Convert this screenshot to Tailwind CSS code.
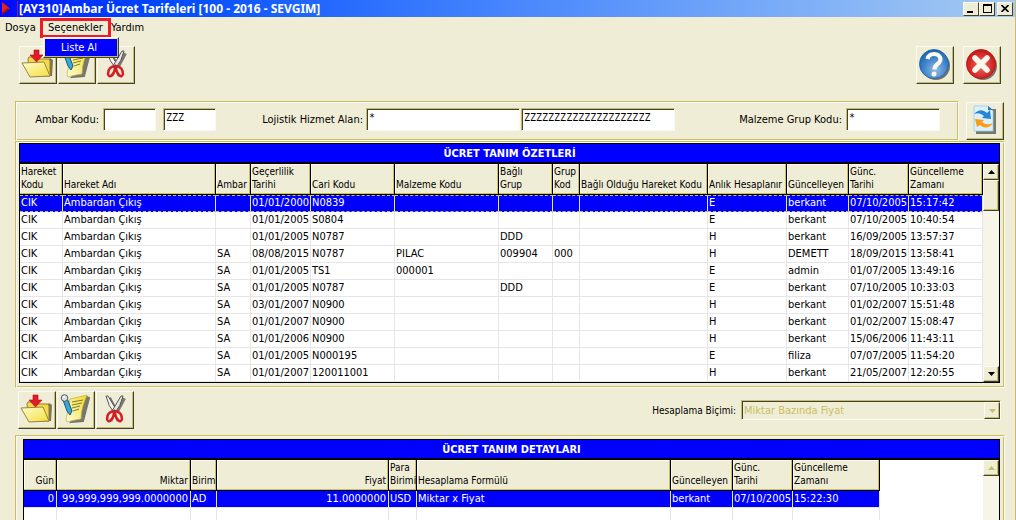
<!DOCTYPE html>
<html lang="tr">
<head>
<meta charset="utf-8">
<title>[AY310]Ambar Ücret Tarifeleri</title>
<script src="https://cdn.jsdelivr.net/npm/@tailwindcss/browser@4"></script>
</head>
<body class="h-screen overflow-hidden bg-[#f0edd6] font-['DejaVu_Sans_Condensed','DejaVu_Sans',sans-serif] text-[11px] leading-[13px] text-black">

<svg class="absolute size-0" aria-hidden="true">
  <defs>
    <linearGradient id="paper" x1="0" y1="0" x2="1" y2="1"><stop offset="0" stop-color="#fffbd0"/><stop offset="1" stop-color="#f3df3a"/></linearGradient>
    <linearGradient id="note" x1="1" y1="0" x2="0" y2="1"><stop offset="0" stop-color="#f0dc20"/><stop offset="1" stop-color="#fffce0"/></linearGradient>
    <radialGradient id="blue" cx=".55" cy=".7" r=".7"><stop offset="0" stop-color="#8fbbe8"/><stop offset=".6" stop-color="#3d82c8"/><stop offset="1" stop-color="#1766b0"/></radialGradient>
    <radialGradient id="red" cx=".5" cy=".55" r=".6"><stop offset="0" stop-color="#f07070"/><stop offset=".6" stop-color="#d83030"/><stop offset="1" stop-color="#c01010"/></radialGradient>
  </defs>
  <symbol id="open" viewBox="0 0 34 34">
    <path d="M9 29 31 28 32 12 29 10z" fill="#77745f"/>
    <path d="M7 11 8 9h6l2 2h12l1 2v15H9z" fill="#f4d94a" stroke="#9c7b20"/>
    <path d="M1 15 23 14 29 28 9 29z" fill="url(#paper)" stroke="#9b8544"/>
    <path d="M13 2h5v5h4l-6.500 7L9 7h4z" fill="#e01c28" stroke="#b00c18" stroke-width=".6"/>
  </symbol>
  <symbol id="edit" viewBox="0 0 34 34">
    <path d="M12 29 24 28 30 5 28 4z" fill="#77776c" stroke="#77776c" stroke-width="2"/>
    <path d="M11 6Q20 4 28 2q-2 5-4 11t-2 13q-7 1-14 3Q6 26 8 22z" fill="url(#note)" stroke="#c4ad38" stroke-width=".7"/>
    <path d="m13 9 11-2M13 12l10-2M13 15l8-2M14 18l6-2" stroke="#857a36" fill="none"/>
    <path d="m4 7 4-2 5 13-2 4-3-4z" fill="#38a8d8" stroke="#175978"/>
    <circle cx="5.500" cy="5" r="3.300" fill="#d9dde5" stroke="#555b68"/>
    <circle cx="5" cy="4" r="1" fill="#fff"/>
  </symbol>
  <symbol id="cut" viewBox="0 0 34 34">
    <path d="m11 5 9 17m6-17-9 17" stroke="#77776c" stroke-width="4"/>
    <path d="M8 3l2 0 9 15-2 3Q10 13 8 3z" fill="#f5f5f5" stroke="#555"/>
    <path d="M25 3l-2 0-9 15 2 3Q23 13 25 3z" fill="#e6e6e8" stroke="#555"/>
    <path d="M13 28q2-4 3-8m4 8q-2-4-3-8" stroke="#8c8c80" stroke-width="3" fill="none"/>
    <path d="M16 18q-7 1-7 8 1 4 4 1 3-3 3-9Zm1 0q7 1 7 8-1 4-4 1-3-3-3-9Z" fill="#f0edd6" stroke="#d81c22" stroke-width="2.500"/>
    <circle cx="16.500" cy="18" r="1" fill="#555"/>
  </symbol>
  <symbol id="help" viewBox="0 0 34 34">
    <circle cx="18" cy="18" r="14" fill="#74746c"/>
    <circle cx="16" cy="16" r="14.500" fill="url(#blue)" stroke="#1a5f9e" stroke-width=".8"/>
    <path d="M9.500 11q1-5 6.500-5t6.500 5q0 3-3.500 5.500-2.500 2-2.500 5" fill="none" stroke="#faf8ea" stroke-width="4.200"/>
    <circle cx="16" cy="26" r="2.500" fill="#faf8ea"/>
  </symbol>
  <symbol id="close" viewBox="0 0 34 34">
    <circle cx="18" cy="18" r="14" fill="#74746c"/>
    <circle cx="16" cy="16" r="14.500" fill="url(#red)" stroke="#a81414" stroke-width=".8"/>
    <path d="m10 10 12 12m0-12-12 12" stroke="#faf8ea" stroke-width="5.500" stroke-linecap="round"/>
  </symbol>
  <symbol id="refresh" viewBox="0 0 34 34">
    <path d="M8 5h20v25H8z" fill="#77776c"/>
    <path d="M6 2h14l5 5v20H6z" fill="#dcf0fb" stroke="#9ccbe4" stroke-width=".8"/>
    <path d="M20 2v4h5z" fill="#2a78b8"/>
    <path d="M6 10q7-7 13-1l3-3 1 9-9-1 2-2q-4-4-10-2z" fill="#2484d8"/>
    <path d="M25 19q-6 8-13 2l-3 2-2-8 9 1-2 2q4 4 11 1z" fill="#fb9c14"/>
  </symbol>
</svg>

<main class="flex h-full flex-col overflow-hidden border-r border-[#c8bf64]">

  <header class="flex h-[17px] shrink-0 items-center bg-linear-to-r from-[#0000ff] to-[#a6caf0] pl-[2px] pr-[2px]">
    <svg class="h-[13px] w-[15px] shrink-0" viewBox="0 0 15 13" aria-hidden="true"><path d="M0 0 8 6.500 0 13z" fill="#e02418"/><path d="M0 13 8 6.500H5L0 11z" fill="#8c1010"/></svg>
    <h1 class="flex-1 whitespace-nowrap border-l border-[#8a2090] pl-px font-['Noto_Sans',sans-serif] text-[12px] leading-[16px] font-bold text-white">[AY310]Ambar Ücret Tarifeleri [100 - 2016 - SEVGIM]</h1>
    <div class="flex">
      <button aria-label="Simge durumuna küçült" class="flex h-[14px] w-[16px] items-end justify-start border border-t-[#fbfaf0] border-l-[#fbfaf0] border-r-[#404038] border-b-[#404038] bg-[#f0edd6] pb-[2px] pl-[3px]"><span class="h-[2px] w-[6px] bg-black"></span></button>
      <button aria-label="Ekranı kapla" class="flex h-[14px] w-[16px] items-center justify-center border border-t-[#fbfaf0] border-l-[#fbfaf0] border-r-[#404038] border-b-[#404038] bg-[#f0edd6]"><span class="h-[9px] w-[9px] border border-t-2 border-black"></span></button>
      <button aria-label="Kapat" class="ml-[2px] flex h-[14px] w-[16px] items-center justify-center border border-t-[#fbfaf0] border-l-[#fbfaf0] border-r-[#404038] border-b-[#404038] bg-[#f0edd6]"><svg class="h-[7px] w-[8px]" viewBox="0 0 8 7"><path d="m.5 0 7 7m0-7-7 7" stroke="#000" stroke-width="1.600"/></svg></button>
    </div>
  </header>

  <nav class="relative flex h-5 shrink-0 items-center pl-[5px]">
    <button class="w-[35px] whitespace-nowrap text-left">Dosya</button>
    <div class="relative">
      <button class="mt-px h-5 w-[71px] whitespace-nowrap border-3 border-[#ed1c24] pl-[5px] text-left">Seçenekler</button>
      <div class="absolute top-5 left-[3px] z-10 w-[76px] border border-t-[#fbfaf0] border-l-[#fbfaf0] border-r-[#404038] border-b-[#404038] bg-[#f0edd6] p-px shadow-[inset_-1px_-1px_#c8bf64]">
        <button class="block h-[17px] w-full bg-[#0000ff] pl-4 text-left text-white">Liste Al</button>
      </div>
    </div>
    <button class="whitespace-nowrap">Yardım</button>
  </nav>

  <div class="mt-[9px] flex shrink-0 pr-[14px] pl-[19px]">
    <div class="flex flex-1 gap-px">
      <button aria-label="Aç" class="size-[38px] border border-t-[#fbfaf0] border-l-[#fbfaf0] border-r-[#404038] border-b-[#404038] p-px shadow-[inset_-1px_-1px_#c8bf64]"><svg class="size-[34px]"><use href="#open"/></svg></button>
      <button aria-label="Düzenle" class="size-[38px] border border-t-[#fbfaf0] border-l-[#fbfaf0] border-r-[#404038] border-b-[#404038] p-px shadow-[inset_-1px_-1px_#c8bf64]"><svg class="size-[34px]"><use href="#edit"/></svg></button>
      <button aria-label="Sil" class="size-[38px] border border-t-[#fbfaf0] border-l-[#fbfaf0] border-r-[#404038] border-b-[#404038] p-px shadow-[inset_-1px_-1px_#c8bf64]"><svg class="size-[34px]"><use href="#cut"/></svg></button>
    </div>
    <div class="flex gap-[9px]">
      <button aria-label="Yardım" class="size-[38px] border border-t-[#fbfaf0] border-l-[#fbfaf0] border-r-[#404038] border-b-[#404038] p-px shadow-[inset_-1px_-1px_#c8bf64]"><svg class="size-[34px]"><use href="#help"/></svg></button>
      <button aria-label="Çıkış" class="size-[38px] border border-t-[#fbfaf0] border-l-[#fbfaf0] border-r-[#404038] border-b-[#404038] p-px shadow-[inset_-1px_-1px_#c8bf64]"><svg class="size-[34px]"><use href="#close"/></svg></button>
    </div>
  </div>

  <form class="mt-[17px] flex shrink-0 gap-[7px] pr-[11px] pl-[15px]">
    <div class="flex h-10 flex-1 items-center border border-t-[#c8bf64] border-l-[#c8bf64] border-r-[#fbfaf0] border-b-[#fbfaf0] pr-[18px] pb-[3px] pl-[21px] whitespace-nowrap shadow-[inset_1px_1px_#fbfaf0,inset_-1px_-1px_#c8bf64]">
      <div class="flex items-center">
        <label for="ambar1" class="mr-1 flex w-[62px] justify-end">Ambar Kodu:</label>
        <input id="ambar1" class="h-[23px] w-[53px] border border-t-[#c8bf64] border-l-[#c8bf64] border-r-[#fbfaf0] border-b-[#fbfaf0] bg-white px-[2px] pb-[4px] font-['DejaVu_Sans_Mono',monospace] text-[10px] shadow-[inset_1px_1px_#404038]">
        <input aria-label="Ambar Kodu bitiş" value="ZZZ" class="ml-[7px] h-[23px] w-[53px] border border-t-[#c8bf64] border-l-[#c8bf64] border-r-[#fbfaf0] border-b-[#fbfaf0] bg-white px-[2px] pb-[4px] font-['DejaVu_Sans_Mono',monospace] text-[10px] shadow-[inset_1px_1px_#404038]">
      </div>
      <div class="ml-[49px] flex items-center">
        <label for="loj1" class="mr-[3px] flex w-[98px] justify-end">Lojistik Hizmet Alan:</label>
        <input id="loj1" value="*" class="h-[23px] w-[154px] border border-t-[#c8bf64] border-l-[#c8bf64] border-r-[#fbfaf0] border-b-[#fbfaf0] bg-white px-[2px] pb-[4px] font-['DejaVu_Sans_Mono',monospace] text-[10px] shadow-[inset_1px_1px_#404038]">
        <input aria-label="Lojistik Hizmet Alan bitiş" value="ZZZZZZZZZZZZZZZZZZZZZ" class="ml-px h-[23px] w-[154px] border border-t-[#c8bf64] border-l-[#c8bf64] border-r-[#fbfaf0] border-b-[#fbfaf0] bg-white px-[2px] pb-[4px] font-['DejaVu_Sans_Mono',monospace] text-[10px] shadow-[inset_1px_1px_#404038]">
      </div>
      <div class="ml-auto flex items-center">
        <label for="malz" class="mr-1">Malzeme Grup Kodu:</label>
        <input id="malz" value="*" class="h-[23px] w-[94px] border border-t-[#c8bf64] border-l-[#c8bf64] border-r-[#fbfaf0] border-b-[#fbfaf0] bg-white px-[2px] pb-[4px] font-['DejaVu_Sans_Mono',monospace] text-[10px] shadow-[inset_1px_1px_#404038]">
      </div>
    </div>
    <button type="button" aria-label="Yenile" class="mt-px size-[38px] border border-t-[#fbfaf0] border-l-[#fbfaf0] border-r-[#404038] border-b-[#404038] p-px shadow-[inset_-1px_-1px_#c8bf64]"><svg class="size-[34px]"><use href="#refresh"/></svg></button>
  </form>

  <section class="mr-[10px] ml-[15px] shrink-0 border border-t-[#c8bf64] border-l-[#c8bf64] border-r-[#fbfaf0] border-b-[#fbfaf0] pt-px pr-1 pb-[4px] pl-[3px] shadow-[inset_1px_1px_#fbfaf0,inset_-1px_-1px_#c8bf64]">
    <div class="border border-black">
      <h2 class="h-5 border-b-2 border-black bg-[#0000ff] text-center leading-[19px] font-bold text-white">ÜCRET TANIM ÖZETLERİ</h2>
      <div class="flex bg-white">
        <div class="min-w-0 flex-1">
          <table class="w-full table-fixed border-separate border-spacing-0 whitespace-nowrap">
            <colgroup><col class="w-[43px]"><col><col class="w-[35px]"><col class="w-[60px]"><col class="w-[84px]"><col class="w-[104px]"><col class="w-[54px]"><col class="w-[27px]"><col class="w-[128px]"><col class="w-[79px]"><col class="w-[62px]"><col class="w-[60px]"><col class="w-[74px]"></colgroup>
            <thead id="sumHead"></thead>
            <tbody id="sumBody"></tbody>
          </table>
        </div>
        <div class="flex w-4 flex-col bg-[#f6f5e8]">
          <button aria-label="Yukarı" class="flex h-4 items-center justify-center border border-t-[#fbfaf0] border-l-[#fbfaf0] border-r-[#404038] border-b-[#404038] bg-[#f0edd6] shadow-[inset_-1px_-1px_#c8bf64]"><svg class="h-1 w-[7px]" viewBox="0 0 7 4"><path d="M0 4 3.500 0 7 4z"/></svg></button>
          <div class="h-[31px] border border-t-[#fbfaf0] border-l-[#fbfaf0] border-r-[#404038] border-b-[#404038] bg-[#f0edd6] shadow-[inset_-1px_-1px_#c8bf64]"></div>
          <button aria-label="Aşağı" class="mt-auto flex h-4 items-center justify-center border border-t-[#fbfaf0] border-l-[#fbfaf0] border-r-[#404038] border-b-[#404038] bg-[#f0edd6] shadow-[inset_-1px_-1px_#c8bf64]"><svg class="h-1 w-[7px]" viewBox="0 0 7 4"><path d="M0 0 3.500 4 7 0z"/></svg></button>
        </div>
      </div>
    </div>
  </section>

  <div class="mt-[3px] flex shrink-0 items-center pr-[14px] pl-[18px]">
    <div class="flex flex-1 gap-px">
      <button aria-label="Detay aç" class="size-[38px] border border-t-[#fbfaf0] border-l-[#fbfaf0] border-r-[#404038] border-b-[#404038] p-px shadow-[inset_-1px_-1px_#c8bf64]"><svg class="size-[34px]"><use href="#open"/></svg></button>
      <button aria-label="Detay düzenle" class="size-[38px] border border-t-[#fbfaf0] border-l-[#fbfaf0] border-r-[#404038] border-b-[#404038] p-px shadow-[inset_-1px_-1px_#c8bf64]"><svg class="size-[34px]"><use href="#edit"/></svg></button>
      <button aria-label="Detay sil" class="size-[38px] border border-t-[#fbfaf0] border-l-[#fbfaf0] border-r-[#404038] border-b-[#404038] p-px shadow-[inset_-1px_-1px_#c8bf64]"><svg class="size-[34px]"><use href="#cut"/></svg></button>
    </div>
    <label for="bicim" class="mr-[5px] text-[10px]">Hesaplama Biçimi:</label>
    <div class="relative">
      <select id="bicim" disabled class="block h-[20px] w-[260px] appearance-none border border-t-[#c8bf64] border-l-[#c8bf64] border-r-[#fbfaf0] border-b-[#fbfaf0] bg-[#f0edd6] pl-[2px] text-[#c8bf64] opacity-100 shadow-[inset_1px_1px_#404038]"><option>Miktar Bazında Fiyat</option></select>
      <span class="pointer-events-none absolute top-[2px] right-px flex h-[17px] w-4 items-center justify-center border border-t-[#fbfaf0] border-l-[#fbfaf0] border-r-[#404038] border-b-[#404038] bg-[#f0edd6] shadow-[inset_-1px_-1px_#c8bf64]"><svg class="h-1 w-[7px]" viewBox="0 0 7 4"><path d="M0 0 3.500 4 7 0z" fill="#c8bf64"/></svg></span>
    </div>
  </div>

  <section class="mt-[6px] mr-[10px] ml-[15px] flex min-h-0 flex-1 border-t border-r border-l border-t-[#c8bf64] border-l-[#c8bf64] border-r-[#fbfaf0] pt-[3px] pr-1 pl-[7px] shadow-[inset_1px_1px_#fbfaf0,inset_-1px_0_#c8bf64]">
    <div class="flex flex-1 flex-col border-x border-t border-black">
      <h2 class="h-[20px] shrink-0 border-b-2 border-black bg-[#0000ff] text-center leading-[20px] font-bold text-white">ÜCRET TANIM DETAYLARI</h2>
      <div class="flex min-h-0 flex-1 bg-white">
        <div class="min-w-0 flex-1 pr-[103px]">
          <table class="h-full w-full table-fixed border-separate border-spacing-0 whitespace-nowrap">
            <colgroup><col class="w-[33px]"><col class="w-[134px]"><col class="w-[26px]"><col class="w-[172px]"><col class="w-[28px]"><col><col class="w-[62px]"><col class="w-[60px]"><col class="w-[87px]"></colgroup>
            <thead id="detHead"></thead>
            <tbody id="detBody"></tbody>
          </table>
        </div>
        <div class="w-4 bg-[#f6f5e8]">
          <button disabled aria-label="Detay yukarı" class="flex h-4 w-full items-center justify-center border border-t-[#fbfaf0] border-l-[#fbfaf0] border-r-[#404038] border-b-[#404038] bg-[#f0edd6] shadow-[inset_-1px_-1px_#c8bf64]"><svg class="h-1 w-[7px]" viewBox="0 0 7 4"><path d="M0 4 3.500 0 7 4z" fill="#c8bf64"/></svg></button>
        </div>
      </div>
    </div>
  </section>
</main>

<script>
const TH = 'h-[31px] border-r border-b border-black p-0 pb-[3px] pl-px align-bottom text-[10px] font-normal leading-[13px] bg-[#f0edd6] shadow-[inset_-1px_-1px_#c8bf64,inset_1px_1px_#fbfaf0]';
const TD = 'h-[17px] border-r border-b border-[#e6e6e6] p-0 pl-px leading-4';
const FOCUS = 'h-[17px] border-y border-dashed border-y-[#c8bf64] shadow-[inset_-1px_0_#e6e6e6] bg-[#0000ff] text-white p-0 pl-px align-top leading-[14px]';
const SEL = 'h-[17px] border-r border-b border-[#e6e6e6] bg-[#0000ff] text-white p-0 pl-px leading-4';
const cell = (tag, cls, html) => `<${tag} class="${cls}">${html}</${tag}>`;

const heads = ['Hareket<br>Kodu','Hareket Adı','Ambar','Geçerlilik<br>Tarihi','Cari Kodu','Malzeme Kodu','Bağlı<br>Grup','Grup<br>Kod','Bağlı Olduğu Hareket Kodu','Anlık Hesaplanır','Güncelleyen','Günc.<br>Tarihi','Güncelleme<br>Zamanı'];
const rows = [
  ['','01/01/2000','N0839','','','','E','berkant','07/10/2005','15:17:42'],
  ['','01/01/2005','S0804','','','','E','berkant','07/10/2005','10:40:54'],
  ['','01/01/2005','N0787','','DDD','','H','berkant','16/09/2005','13:57:37'],
  ['SA','08/08/2015','N0787','PILAC','009904','000','H','DEMETT','18/09/2015','13:58:41'],
  ['SA','01/01/2005','TS1','000001','','','E','admin','01/07/2005','13:49:16'],
  ['SA','01/01/2005','N0787','','DDD','','E','berkant','07/10/2005','10:33:03'],
  ['SA','03/01/2007','N0900','','','','H','berkant','01/02/2007','15:51:48'],
  ['SA','01/01/2007','N0900','','','','H','berkant','01/02/2007','15:08:47'],
  ['SA','01/01/2006','N0900','','','','H','berkant','15/06/2006','11:43:11'],
  ['SA','01/01/2005','N000195','','','','E','filiza','07/07/2005','11:54:20'],
  ['SA','01/01/2007','120011001','','','','H','berkant','21/05/2007','12:20:55'],
];
document.getElementById('sumHead').innerHTML = '<tr>' + heads.map(h => cell('th', TH + ' text-left', h)).join('') + '</tr>';
document.getElementById('sumBody').innerHTML = rows.map((r, i) => {
  const full = ['CIK', 'Ambardan Çıkış', ...r.slice(0, 6), '', ...r.slice(6)];
  return '<tr>' + full.map(v => cell('td', i ? TD : FOCUS, v)).join('') + '</tr>';
}).join('');

const dHeads = ['Gün','Miktar','Birim','Fiyat','Para<br>Birimi','Hesaplama Formülü','Güncelleyen','Günc.<br>Tarihi','Güncelleme<br>Zamanı'];
const dRow = ['0','99,999,999,999.0000000','AD','11.0000000','USD','Miktar x Fiyat','berkant','07/10/2005','15:22:30'];
const side = i => [0, 1, 3].includes(i) ? ' text-right pr-[2px]' : ' text-left';
document.getElementById('detHead').innerHTML = '<tr>' + dHeads.map((h, i) => cell('th', TH + side(i), h)).join('') + '</tr>';
document.getElementById('detBody').innerHTML =
  '<tr>' + dRow.map((v, i) => cell('td', SEL + side(i), v)).join('') + '</tr>' +
  '<tr>' + dRow.map(() => cell('td', 'h-full border-r border-[#e6e6e6] p-0', '')).join('') + '</tr>';
</script>
</body>
</html>
